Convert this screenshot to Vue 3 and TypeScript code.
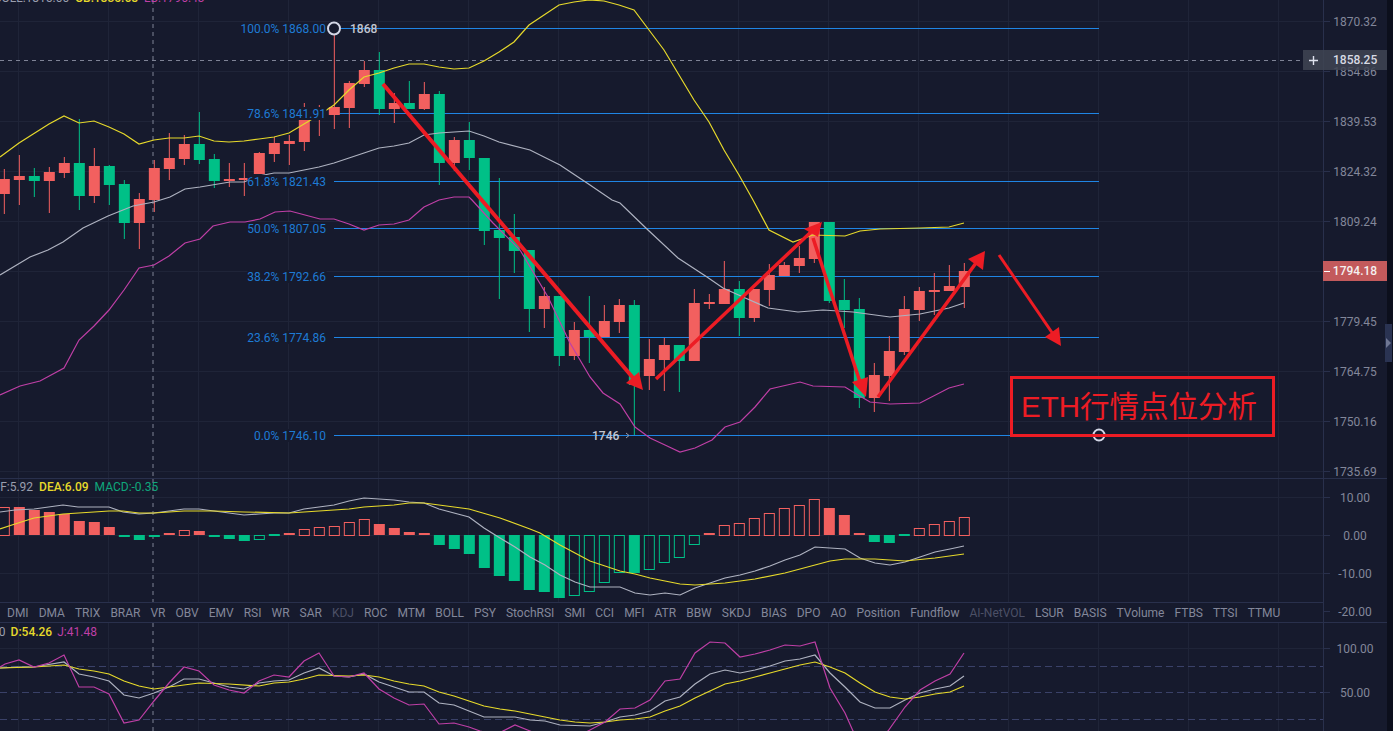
<script setup lang="ts">
type Candle = [number, number, number, number, 0 | 1]
type Pt = [number, number]
const colX = (i: number): number => 4.33 + 15 * i
const UP = '#f2605f'
const DOWN = '#00c087'

// top of body, bottom of body, high, low, 1 = red
const candles: Candle[] = [
  [179,194,169,214,1],[176,180,155,205,1],[176,181,168,197,0],[172,181,167,213,1],[163,173,157,178,1],
  [163,196,119,210,0],[166,196,148,203,1],[166,185,165,205,0],[184,223,180,239,0],[199,223,193,249,1],
  [168,200,160,212,1],[158,169,133,180,1],[144,159,135,165,1],[144,160,112,164,0],[159,181,154,188,0],
  [179,181,163,187,1],[178,180,163,196,1],[153,174,152,174,1],[143,154,137,162,1],[141,144,135,165,1],
  [120,142,103,151,1],[112,113,105,136,1],[107,115,33,129,1],[83,108,81,128,1],[70,84,61,87,1],
  [70,109,52,115,0],[103,109,93,123,1],[103,109,81,109,0],[94,109,82,110,1],[94,163,91,185,0],
  [140,163,137,171,1],[140,158,122,170,0],[158,231,158,245,0],[230,238,178,299,0],[237,251,214,273,0],
  [250,309,250,332,0],[296,309,287,328,1],[296,356,296,366,0],[330,356,322,360,1],[330,337,296,363,0],
  [321,337,305,337,1],[305,322,299,333,1],[305,385,300,435,0],[359,376,339,390,1],[345,360,338,391,1],
  [345,361,345,392,0],[303,361,289,361,1],[302,304,294,309,1],[289,304,261,304,1],[289,318,281,336,0],
  [289,318,289,322,1],[275,290,264,306,1],[265,276,262,276,1],[258,266,246,273,1],[222,259,222,263,1],
  [222,301,222,303,0],[300,310,279,328,0],[309,398,298,408,0],[375,398,363,412,1],[351,376,336,401,1],
  [309,352,296,355,1],[291,310,287,321,1],[290,292,273,315,1],[286,291,265,291,1],[271,287,263,308,1],
]

const bollUpper: Pt[] = [[0,157],[19,143],[49,124],[64,116],[79,123],[94,121],[109,127],[124,134],[139,144],[154,140],[169,138],[184,138],[199,136],[214,141],[229,142],[244,141],[259,139],[274,137],[289,133],[304,124],[319,115],[334,105],[349,90],[364,77],[379,73],[394,68],[409,64],[424,64],[439,67],[454,69],[469,68],[484,61],[499,52],[514,42],[529,25],[544,15],[559,5],[574,2],[589,0],[604,1],[619,5],[634,10],[649,30],[664,50],[679,75],[694,100],[709,122],[724,150],[739,175],[753,200],[769,230],[793,242],[813,235],[845,236],[860,231],[880,229],[920,228],[949,227],[964,223]]
const bollMid: Pt[] = [[0,275],[30,257],[48,250],[63,242],[83,228],[108,216],[133,206],[154,202],[170,197],[185,189],[200,187],[230,182],[244,182],[259,176],[274,173],[289,173],[304,170],[319,167],[334,163],[349,158],[364,153],[379,148],[394,146],[409,143],[424,135],[439,133],[454,132],[469,131],[484,136],[499,142],[530,150],[560,165],[590,185],[612,200],[620,203],[648,230],[678,258],[707,277],[723,288],[743,297],[768,308],[798,312],[823,310],[853,312],[890,317],[920,314],[949,308],[964,303]]
const bollLower: Pt[] = [[0,395],[20,386],[40,381],[64,368],[79,340],[94,326],[109,310],[124,290],[139,268],[154,265],[169,256],[185,243],[200,239],[213,226],[230,222],[245,222],[260,219],[275,212],[290,211],[305,215],[320,219],[334,219],[349,224],[364,230],[379,225],[394,224],[409,220],[424,207],[439,200],[454,197],[469,197],[472,200],[493,223],[520,250],[548,297],[570,343],[590,377],[603,393],[620,404],[635,427],[650,438],[665,445],[680,452],[695,448],[712,440],[725,427],[740,422],[755,407],[770,389],[800,382],[813,386],[845,387],[858,395],[870,402],[890,404],[920,403],[949,388],[964,384]]

// w = width of the opaque plate behind the label
const fibs: { y: number; label: string; w: number }[] = [
  { y: 28, label: '100.0% 1868.00', w: 86 },
  { y: 113, label: '78.6% 1841.91', w: 79 },
  { y: 181, label: '61.8% 1821.43', w: 79 },
  { y: 228, label: '50.0% 1807.05', w: 79 },
  { y: 276, label: '38.2% 1792.66', w: 79 },
  { y: 337, label: '23.6% 1774.86', w: 79 },
  { y: 435, label: '0.0% 1746.10', w: 73 },
]

interface Arrow { line: [number, number, number, number]; head: string; w: number }
const arrows: Arrow[] = [
  { line: [383, 84, 634, 379], head: '643,390 626,383 639,372', w: 4 },
  { line: [656, 379, 812, 231], head: '822,222 804,229 818,237', w: 3.5 },
  { line: [813, 238, 861, 385], head: '866,397 852,382 868,377', w: 3.5 },
  { line: [878, 397, 976, 263], head: '985,251 968,259 983,270', w: 3.5 },
  { line: [999, 255, 1053, 334], head: '1061,346 1045,337 1059,327', w: 3 },
]

// tip of the bar (zero line at 535) and whether it is hollow
const macdTips: [number, number][] = [
  [507,1],[507,0],[510,0],[512,0],[514,0],[521,0],[522,0],[527,0],[537,0],[540,0],
  [537,0],[533,0],[530,1],[531,0],[537,0],[539,0],[541,0],[539,1],[534,0],[533,0],
  [529,1],[527,1],[526,1],[522,1],[519,1],[524,0],[528,0],[532,0],[533,0],[545,0],
  [549,0],[554,0],[568,0],[576,0],[581,0],[590,0],[592,0],[598,0],[595,1],[591,1],
  [582,1],[572,1],[573,0],[569,1],[562,1],[557,1],[544,1],[533,0],[525,1],[523,1],
  [518,1],[513,1],[508,1],[505,1],[499,1],[508,0],[515,0],[533,0],[542,0],[543,0],
  [536,0],[528,1],[524,1],[521,1],[517,1],
]
interface Bar { x: number; y: number; h: number; color: string; hollow: boolean }
const macdBars: Bar[] = macdTips.map(([tip, hollow], i) => {
  let y: number
  let h: number
  let color: string
  if (i === 18 || i === 60) {
    y = 534
    h = 2
    color = DOWN
  } else if (tip < 535) {
    y = tip
    h = 535 - tip
    color = UP
  } else {
    y = 535
    h = tip - 535
    color = DOWN
  }
  return { x: colX(i) - 5.5, y, h, color, hollow: hollow === 1 }
})

const macdWhite: Pt[] = [[0,512],[15,510],[34,509],[63,505],[78,507],[94,507],[109,507],[123,512],[139,514],[154,513],[169,511],[184,509],[199,509],[214,511],[229,513],[244,515],[259,514],[274,513],[289,513],[304,509],[319,507],[334,505],[349,501],[364,498],[379,499],[394,500],[409,502],[424,503],[439,509],[454,513],[469,517],[484,528],[500,538],[515,547],[530,557],[545,565],[560,575],[575,582],[590,587],[605,587],[620,587],[635,593],[650,595],[665,593],[680,595],[695,588],[710,583],[725,578],[740,575],[755,571],[770,566],[785,560],[800,555],[815,547],[830,548],[845,549],[860,558],[875,563],[890,565],[905,562],[920,557],[935,552],[950,549],[964,546]]
const macdYellow: Pt[] = [[0,529],[15,524],[34,518],[63,514],[94,512],[109,511],[123,511],[139,513],[154,513],[184,511],[214,511],[244,512],[289,513],[319,511],[349,509],[364,507],[394,505],[409,503],[424,503],[439,505],[469,509],[500,518],[530,529],[540,533],[560,545],[575,553],[590,561],[605,566],[620,571],[635,574],[650,578],[665,581],[680,584],[695,585],[710,584],[725,583],[755,579],[785,573],[815,565],[830,561],[845,559],[875,559],[890,560],[905,561],[935,558],[964,554]]

const kdjWhite: Pt[] = [[0,668],[19,667],[34,667],[64,662],[79,674],[94,677],[109,681],[124,695],[139,698],[154,693],[169,687],[184,679],[199,679],[214,683],[229,687],[244,689],[259,683],[274,681],[289,680],[304,673],[319,668],[334,676],[349,677],[364,674],[379,682],[394,687],[409,692],[424,692],[439,703],[454,705],[469,711],[484,717],[500,717],[515,717],[530,720],[545,721],[560,725],[590,726],[605,722],[620,717],[635,715],[650,711],[665,701],[680,697],[695,684],[710,674],[725,670],[740,673],[755,670],[770,666],[785,661],[800,659],[815,655],[830,673],[845,687],[860,702],[875,708],[890,708],[905,700],[920,693],[935,689],[950,686],[964,676]]
const kdjYellow: Pt[] = [[0,668],[34,667],[64,665],[79,669],[94,671],[109,674],[124,681],[139,686],[154,689],[169,687],[184,685],[199,683],[229,684],[259,686],[274,683],[289,682],[304,679],[319,675],[349,676],[364,675],[379,677],[394,681],[409,684],[424,686],[439,692],[454,696],[469,701],[484,706],[500,709],[515,711],[530,714],[545,717],[560,720],[575,722],[590,723],[605,722],[620,720],[635,719],[650,717],[665,711],[680,706],[695,698],[710,691],[725,684],[740,681],[755,677],[770,673],[785,669],[800,665],[815,662],[830,667],[845,673],[860,683],[875,692],[890,697],[905,699],[920,697],[935,694],[950,692],[964,686]]
const kdjPink: Pt[] = [[0,667],[5,664],[19,660],[34,667],[49,663],[64,655],[79,687],[94,687],[109,694],[124,723],[139,720],[154,701],[169,683],[184,667],[199,671],[214,685],[229,690],[244,693],[259,681],[274,675],[289,677],[304,661],[319,653],[334,676],[349,677],[364,673],[379,689],[394,698],[409,705],[424,704],[439,724],[454,723],[469,727],[480,731],[495,735],[515,725],[530,731],[545,738],[575,738],[590,730],[605,722],[620,709],[635,708],[650,700],[665,681],[680,679],[695,653],[710,642],[725,643],[740,657],[755,654],[770,650],[785,645],[800,646],[815,642],[830,688],[845,713],[853,731],[870,745],[888,731],[905,707],[920,690],[935,681],[950,674],[964,653]]

const pts = (p: Pt[]): string => p.map(([x, y]) => `${x},${y}`).join(' ')

const vGrid: number[] = Array.from({ length: 15 }, (_, k) => 18.5 + 90 * k)
const mainGrid: number[] = [21, 71, 121, 171, 221, 271, 321, 371, 421, 471]
const macdGrid: number[] = [497, 535, 573]
const kdjDash: number[] = [666, 692, 719]

const mainTicks: string[] = ['1870.32', '1854.86', '1839.53', '1824.32', '1809.24', '1794.18', '1779.45', '1764.75', '1750.16', '1735.69']
const macdTicks: string[] = ['10.00', '0.00', '-10.00', '-20.00']
const kdjTicks: string[] = ['100.00', '50.00']

const tabs: { name: string; dim?: boolean }[] = [
  { name: 'DMI' }, { name: 'DMA' }, { name: 'TRIX' }, { name: 'BRAR' }, { name: 'VR' }, { name: 'OBV' },
  { name: 'EMV' }, { name: 'RSI' }, { name: 'WR' }, { name: 'SAR' }, { name: 'KDJ', dim: true }, { name: 'ROC' },
  { name: 'MTM' }, { name: 'BOLL' }, { name: 'PSY' }, { name: 'StochRSI' }, { name: 'SMI' }, { name: 'CCI' },
  { name: 'MFI' }, { name: 'ATR' }, { name: 'BBW' }, { name: 'SKDJ' }, { name: 'BIAS' }, { name: 'DPO' },
  { name: 'AO' }, { name: 'Position' }, { name: 'Fundflow' }, { name: 'AI-NetVOL', dim: true }, { name: 'LSUR' },
  { name: 'BASIS' }, { name: 'TVolume' }, { name: 'FTBS' }, { name: 'TTSI' }, { name: 'TTMU' },
]
</script>

<template>
  <div class="screen">
    <div class="panes">
      <!-- main candle pane -->
      <section class="pane pane-main">
        <div class="plot">
          <svg class="chart" viewBox="0 0 1323 478" width="1323" height="478">
            <g class="grid">
              <line v-for="x in vGrid" :key="'v' + x" :x1="x" :x2="x" y1="0" y2="478" />
              <line v-for="y in mainGrid" :key="'h' + y" x1="0" x2="1323" :y1="y + 0.5" :y2="y + 0.5" />
            </g>
            <line class="cross" x1="0" x2="1303" y1="60.5" y2="60.5" />
            <line class="cross" x1="153" x2="153" y1="0" y2="478" />
            <line v-for="f in fibs" :key="f.y" class="fib" x1="334" x2="1099" :y1="f.y + 0.5" :y2="f.y + 0.5" />
            <g v-for="(c, i) in candles" :key="i" :fill="c[4] ? UP : DOWN">
              <rect :x="colX(i) - 0.5" :y="c[2]" width="1" :height="c[3] - c[2]" />
              <rect :x="colX(i) - 5.5" :y="c[0]" width="11" :height="c[1] - c[0]" />
            </g>
            <polyline class="ln yellow" :points="pts(bollUpper)" />
            <polyline class="ln white" :points="pts(bollMid)" />
            <polyline class="ln pink" :points="pts(bollLower)" />
            <g v-for="f in fibs" :key="'t' + f.y">
              <rect class="plate" :x="326.5 - f.w" :y="f.y - 6" :width="f.w" height="13" />
              <text class="fib-label" x="326" :y="f.y + 4.5" text-anchor="end">{{ f.label }}</text>
            </g>
            <text class="mark" x="350" y="32.5">1868</text>
            <text class="mark" x="592" y="439.5">1746</text>
            <path class="chev" d="M626 433 l3 2.5 l-3 2.5" />
            <circle class="anchor" cx="334" cy="28.5" r="6" />
            <circle class="anchor" cx="1099" cy="435" r="5.5" />
            <g v-for="(a, i) in arrows" :key="'a' + i">
              <line class="arrow" :x1="a.line[0]" :y1="a.line[1]" :x2="a.line[2]" :y2="a.line[3]" :stroke-width="a.w" />
              <polygon class="arrow-head" :points="a.head" />
            </g>
          </svg>
          <div class="legend legend-top">
            <span class="grey">BOLL:1815.00</span>
            <span class="yel">UB:1835.68</span>
            <span class="mag">LB:1796.43</span>
          </div>
          <div class="callout">ETH行情点位分析</div>
        </div>
        <div class="axis axis-main">
          <div v-for="t in mainTicks" :key="t" class="tick">{{ t }}</div>
        </div>
        <div class="cross-tag">
          <svg class="plus" width="11" height="11" viewBox="0 0 11 11">
            <path d="M5.5 1v9M1 5.5h9" />
          </svg>
          <span>1858.25</span>
        </div>
        <div class="price-tag">1794.18</div>
      </section>

      <!-- MACD pane -->
      <section class="pane pane-macd">
        <div class="plot plot-col">
          <div class="macd-area">
            <svg class="chart" viewBox="0 479 1323 123" width="1323" height="123">
              <g class="grid">
                <line v-for="x in vGrid" :key="'v' + x" :x1="x" :x2="x" y1="479" y2="602" />
                <line v-for="y in macdGrid" :key="'h' + y" x1="0" x2="1323" :y1="y + 0.5" :y2="y + 0.5" />
              </g>
              <line class="cross" x1="153" x2="153" y1="479" y2="602" />
              <template v-for="(b, i) in macdBars" :key="i">
                <rect v-if="b.hollow" :x="b.x + 0.5" :y="b.y + 0.5" width="10" :height="b.h" fill="none" :stroke="b.color" />
                <rect v-else :x="b.x" :y="b.y" width="11" :height="b.h" :fill="b.color" />
              </template>
              <polyline class="ln white" :points="pts(macdWhite)" />
              <polyline class="ln yellow" :points="pts(macdYellow)" />
            </svg>
            <div class="legend legend-macd">
              <span class="grey">DIF:5.92</span>
              <span class="yel">DEA:6.09</span>
              <span class="grn">MACD:-0.35</span>
            </div>
          </div>
          <nav class="tabs">
            <span v-for="t in tabs" :key="t.name" class="tab" :class="{ dim: t.dim }">{{ t.name }}</span>
          </nav>
        </div>
        <div class="axis axis-macd">
          <div v-for="t in macdTicks" :key="t" class="tick">{{ t }}</div>
        </div>
      </section>

      <!-- KDJ pane -->
      <section class="pane pane-kdj">
        <div class="plot">
          <svg class="chart" viewBox="0 623 1323 108" width="1323" height="108">
            <g class="grid">
              <line v-for="x in vGrid" :key="'v' + x" :x1="x" :x2="x" y1="623" y2="731" />
              <line x1="0" x2="1323" y1="648.5" y2="648.5" />
            </g>
            <line v-for="y in kdjDash" :key="y" class="dash" x1="0" x2="1323" :y1="y + 0.5" :y2="y + 0.5" />
            <line class="cross" x1="153" x2="153" y1="623" y2="731" />
            <polyline class="ln white" :points="pts(kdjWhite)" />
            <polyline class="ln yellow" :points="pts(kdjYellow)" />
            <polyline class="ln pink" :points="pts(kdjPink)" />
          </svg>
          <div class="legend legend-kdj">
            <span class="grey">K:56.10</span>
            <span class="yel">D:54.26</span>
            <span class="mag">J:41.48</span>
          </div>
        </div>
        <div class="axis axis-kdj">
          <div v-for="t in kdjTicks" :key="t" class="tick">{{ t }}</div>
        </div>
      </section>
    </div>
    <aside class="strip">
      <div class="handle"><i></i></div>
    </aside>
  </div>
</template>

<style>
html, body { margin: 0; background: #161a2d; }
</style>

<style scoped>
.screen {
  display: flex;
  width: 1393px;
  height: 731px;
  overflow: hidden;
  background: #161a2d;
  font-family: Roboto, "Liberation Sans", sans-serif;
  font-size: 12px;
}
.panes { width: 1387px; display: flex; flex-direction: column; }
.pane { position: relative; display: flex; flex: none; border-bottom: 1px solid #29304c; }
.pane-main { height: 478px; }
.pane-macd { height: 143px; }
.pane-kdj { height: 108px; border-bottom: 0; }
.plot { position: relative; width: 1323px; flex: none; overflow: hidden; }
.plot-col { display: flex; flex-direction: column; }
.macd-area { position: relative; height: 123px; flex: none; }
.chart { display: block; }

.grid line { stroke: #1f2438; stroke-width: 1; }
.cross { stroke: #7f8396; stroke-width: 1; stroke-dasharray: 4 4; }
.dash { stroke: #3a4168; stroke-width: 1; stroke-dasharray: 7 4; }
.fib { stroke: #1f85e4; stroke-width: 1; }
.plate { fill: #161a2d; }
.fib-label { fill: #1e7bd4; font-size: 12px; font-family: Roboto, sans-serif; }
.mark { fill: #c3c7d2; font-size: 12px; font-weight: 500; font-family: Roboto, sans-serif; }
.chev { fill: none; stroke: #9a9eae; stroke-width: 1; }
.anchor { fill: #161a2d; stroke: #d3d7e6; stroke-width: 2; }
.ln { fill: none; stroke-width: 1.2; }
.yellow { stroke: #e6d92b; }
.white { stroke: #aeb2c0; }
.pink { stroke: #bf3fa6; }
.arrow { stroke: #ed1c24; }
.arrow-head { fill: #ed1c24; }

.legend {
  position: absolute;
  display: flex;
  gap: 6px;
  white-space: nowrap;
  font-size: 12px;
  line-height: 14px;
}
.legend-top { top: -9px; left: -6px; }
.legend-macd { top: 1px; left: -11px; }
.legend-kdj { top: 2px; left: -35px; gap: 5px; }
.grey { color: #9a9eae; }
.yel { color: #e6d92b; font-weight: 500; }
.mag { color: #bf3fa6; }
.grn { color: #0fa77c; }

.callout {
  position: absolute;
  left: 1010px;
  top: 376px;
  width: 265px;
  height: 61px;
  box-sizing: border-box;
  border: 3px solid #ed1c24;
  padding-left: 8px;
  color: #ed1c24;
  font-family: "Liberation Sans", "Noto Sans CJK SC", sans-serif;
  font-size: 29.5px;
  line-height: 55px;
  white-space: nowrap;
}

.axis {
  flex: 1;
  box-sizing: border-box;
  display: flex;
  flex-direction: column;
  border-left: 1px solid #29304c;
  color: #83879a;
  text-align: center;
}
.axis-main { padding-top: 12px; gap: 30px; }
.axis-macd { padding-top: 9px; gap: 18px; }
.axis-kdj { padding-top: 16px; gap: 24px; }
.tick { position: relative; height: 20px; line-height: 20px; margin-left: -1px; }
.tick::before {
  content: "";
  position: absolute;
  left: 1px;
  top: 9px;
  width: 6px;
  height: 1px;
  background: #29304c;
}

.cross-tag {
  position: absolute;
  left: 1303px;
  top: 50px;
  width: 84px;
  height: 20px;
  display: flex;
  align-items: center;
  background: rgba(64, 69, 84, 0.85);
  color: #d7dae3;
  font-weight: 500;
}
.plus { margin-left: 5px; margin-right: 14px; }
.plus path { stroke: #dfe2ee; stroke-width: 1.4; fill: none; }
.price-tag {
  position: absolute;
  left: 1323px;
  top: 261px;
  width: 64px;
  height: 20px;
  line-height: 21px;
  text-align: center;
  background: #c35a5c;
  color: #f4f0f0;
  font-weight: 500;
}
.price-tag::before {
  content: "";
  position: absolute;
  left: 1px;
  top: 10px;
  width: 6px;
  height: 1px;
  background: #fff;
}

.tabs {
  flex: 1;
  display: flex;
  align-items: center;
  gap: 10px;
  padding-left: 7px;
  border-top: 1px solid #29304c;
  white-space: nowrap;
  color: #83879a;
}
.tab.dim { color: #4c5066; }

.strip {
  flex: 1;
  position: relative;
  background: #0c0f1c;
}
.handle {
  position: absolute;
  left: -2px;
  top: 324px;
  width: 7px;
  height: 38px;
  background: #2a3352;
  display: flex;
  align-items: center;
  justify-content: center;
}
.handle i {
  width: 0;
  height: 0;
  border-left: 5px solid #6f7794;
  border-top: 5px solid transparent;
  border-bottom: 5px solid transparent;
}
</style>
